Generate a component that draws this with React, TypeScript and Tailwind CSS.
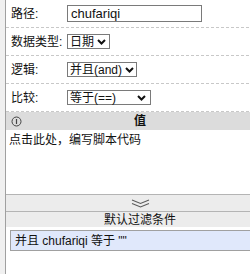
import React from 'react';

const font = { fontFamily: '"Liberation Sans", "Noto Sans CJK SC", sans-serif' };

const Chevron = () => (
  <svg width="9" height="6" viewBox="0 0 9 6" className="shrink-0">
    <path d="M1 1 L4.5 4.5 L8 1" fill="none" stroke="#111" strokeWidth="2" />
  </svg>
);

interface SelectProps {
  value: string;
  width: string;
}

const FakeSelect = ({ value, width }: SelectProps) => (
  <div className={`flex items-center justify-between gap-[3px] h-[15px] border border-[#7a7a7a] bg-white pl-[2px] pr-[4px] whitespace-nowrap ${width}`}>
    <span className="text-[12px] leading-none text-[#111]">{value}</span>
    <Chevron />
  </div>
);

const Row = ({ label, children }: { label: string; children: React.ReactNode }) => (
  <div className="flex items-center h-[28px] border-b border-dashed border-[#c8c8c8]">
    <span className="w-[61px] pl-[5px] text-[12px] text-[#111] whitespace-nowrap">{label}</span>
    {children}
  </div>
);

export default function App() {
  return (
    <div className="w-[250px] h-[274px] overflow-hidden flex bg-white" style={font}>
      <div className="w-[6px] shrink-0 bg-[#f0f0f0] border-r border-[#a0a0a0]" />
      <div className="w-[268px] shrink-0 flex flex-col">
        <Row label="路径:">
          <div className="w-[135px] h-[17px] border border-[#7a7a7a] flex items-center px-[3px] text-[13px] text-[#111]">
            chufariqi
          </div>
        </Row>
        <Row label="数据类型:">
          <FakeSelect value="日期" width="w-[43px]" />
        </Row>
        <Row label="逻辑:">
          <FakeSelect value="并且(and)" width="w-[70px]" />
        </Row>
        <Row label="比较:">
          <FakeSelect value="等于(==)" width="w-[84px]" />
        </Row>
        <div className="relative flex items-center justify-center h-[18px] bg-[#dcdcdc]">
          <svg width="11" height="11" viewBox="0 0 11 11" className="absolute left-[5px] top-[4px]">
            <circle cx="5.5" cy="5.5" r="4.5" fill="none" stroke="#444" strokeWidth="1" />
            <path d="M5.5 3 V8" stroke="#444" strokeWidth="1.2" />
          </svg>
          <span className="text-[12px] font-semibold text-[#111]">值</span>
        </div>
        <div className="h-[64px] pl-[3px] pt-[1px] text-[12px] text-[#111] bg-white">
          点击此处，编写脚本代码
        </div>
        <div className="h-[18px] border-t border-b border-[#b4b4b4] bg-[#ececec] flex items-center justify-center">
          <svg width="19" height="9" viewBox="0 0 19 9">
            <path d="M1 1 L9.5 4.5 L18 1 M1 4.5 L9.5 8 L18 4.5" fill="none" stroke="#5a5a5a" strokeWidth="1.1" />
          </svg>
        </div>
        <div className="h-[15px] bg-[#ececec] flex items-center justify-center text-[12px] text-[#111]">
          默认过滤条件
        </div>
        <div className="pt-[3px] pl-[4px]">
          <div className="h-[21px] border border-[#a0a0a0] bg-[#e0e8fb] flex items-center pl-[4px] text-[12px] text-[#111]">
            并且 chufariqi 等于 ""
          </div>
        </div>
      </div>
    </div>
  );
}
